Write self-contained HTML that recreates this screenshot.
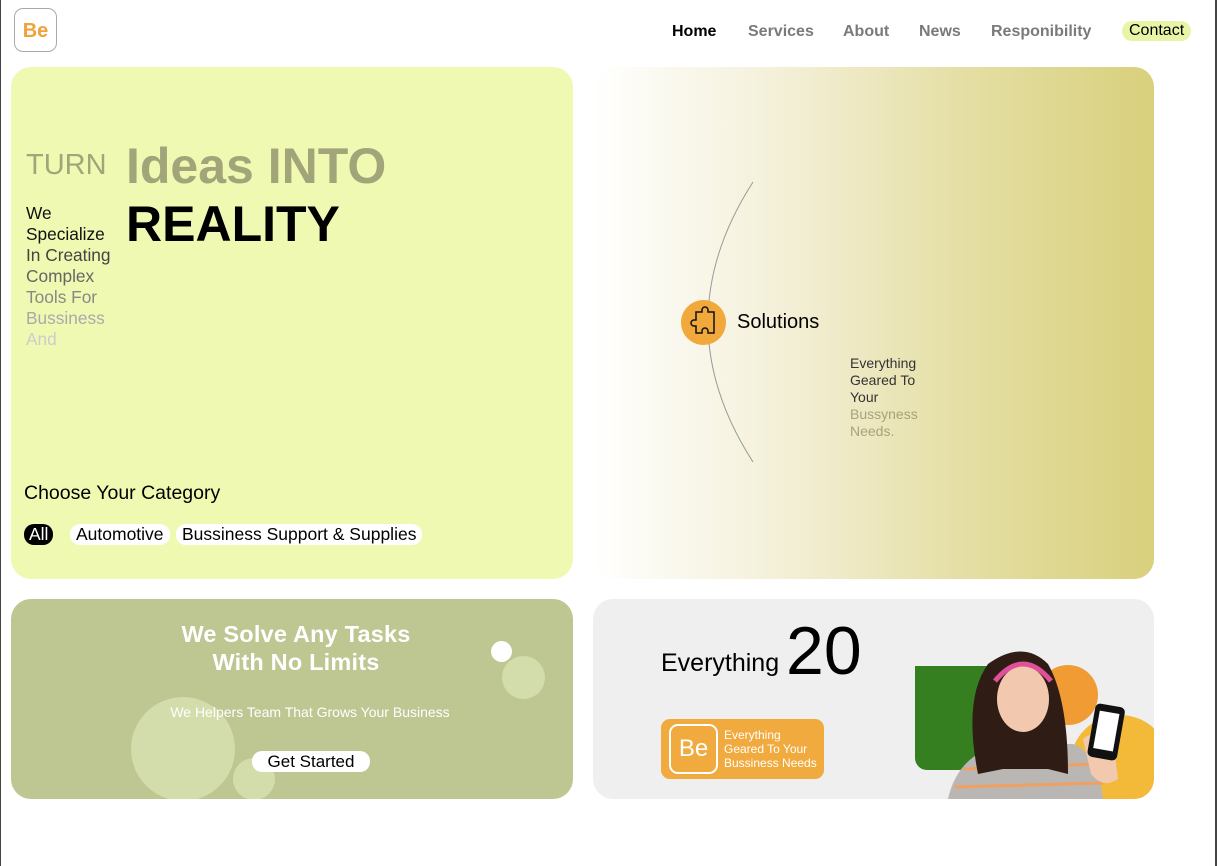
<!DOCTYPE html>
<html><head><meta charset="utf-8"><style>
*{margin:0;padding:0;box-sizing:border-box}
body{width:1217px;height:866px;background:#fff;font-family:"Liberation Sans",Arial,sans-serif;position:relative;overflow:hidden}
.a{position:absolute}
.logo{left:14px;top:8px;width:43px;height:44px;border:1px solid #aaa;border-radius:9px;color:#f0a23b;font-weight:bold;font-size:20px;text-align:center;line-height:44px}
.nav{top:23px;font-size:16px;font-weight:bold;color:#7a7a7a}
.card{border-radius:20px;overflow:hidden}
.tag{background:#fff;border-radius:10px;padding:0 6px;font-size:17.5px;line-height:21px;height:21px;top:524px}
</style></head><body>
<div class="a" style="left:0;top:0;width:1px;height:866px;background:#444"></div>
<div class="a" style="left:1215px;top:0;width:2px;height:866px;background:#444"></div>
<div class="a logo">Be</div>
<div class="a nav" style="left:672px;color:#000">Home</div>
<div class="a nav" style="left:748px">Services</div>
<div class="a nav" style="left:843px">About</div>
<div class="a nav" style="left:919px">News</div>
<div class="a nav" style="left:991px">Responibility</div>
<div class="a" style="left:1122px;top:21px;background:#e8f5a6;border-radius:11px;padding:0 7px;font-size:16px;line-height:20px">Contact</div>

<div class="a card" style="left:11px;top:67px;width:562px;height:512px;background:#f0f9b2">
 <div class="a" style="left:15px;top:82px;font-size:29px;color:#a2a57a">TURN</div>
 <div class="a" style="left:115px;top:70px;font-size:50px;font-weight:bold;color:#a2a57a">Ideas INTO</div>
 <div class="a" style="left:115px;top:128px;font-size:50px;font-weight:bold;color:#000">REALITY</div>
 <div class="a" style="left:15px;top:136px;font-size:17.3px;line-height:21px;width:95px">
  <span style="color:#111">We<br>Specialize</span><br><span style="color:#444">In Creating</span><br><span style="color:#666">Complex</span><br><span style="color:#888">Tools For</span><br><span style="color:#aaa">Bussiness</span><br><span style="color:#ccc">And</span></div>
 <div class="a" style="left:13px;top:415px;font-size:19.5px">Choose Your Category</div>
 <div class="a tag" style="left:13px;background:#000;color:#fff;padding:0 5px;top:457px">All</div>
 <div class="a tag" style="left:59px;top:457px">Automotive</div>
 <div class="a tag" style="left:165px;top:457px">Bussiness Support &amp; Supplies</div>
</div>

<div class="a card" style="left:593px;top:67px;width:561px;height:512px;background:linear-gradient(90deg,#fff 0%,#f3efd6 35%,#e5dfa6 65%,#d8d07c 100%)">
 <svg class="a" style="left:0;top:0" width="561" height="512"><path d="M160 115 Q70 255 160 395" fill="none" stroke="#999" stroke-width="1"/></svg>
 <div class="a" style="left:88px;top:233px;width:45px;height:45px;border-radius:50%;background:#f1a93c"></div>
 <svg class="a" style="left:88px;top:233px" width="45" height="45"><path d="M15 12h6v-2a3 3 0 0 1 6 0v2h6v21h-6v-2a3 3 0 0 0-6 0v2h-6v-7h-2a3 3 0 0 1 0-6h2z" fill="none" stroke="#111" stroke-width="1.5"/></svg>
 <div class="a" style="left:144px;top:244px;font-size:20px">Solutions</div>
 <div class="a" style="left:257px;top:288px;font-size:14px;line-height:17px"><span style="color:#333">Everything<br>Geared To<br>Your</span><br><span style="color:#a6a37a">Bussyness<br>Needs.</span></div>
</div>

<div class="a card" style="left:11px;top:599px;width:562px;height:200px;background:#bec692">
 <div class="a" style="left:120px;top:98px;width:104px;height:104px;border-radius:50%;background:#d3dcab"></div>
 <div class="a" style="left:222px;top:159px;width:42px;height:42px;border-radius:50%;background:#d3dcab"></div>
 <div class="a" style="left:491px;top:57px;width:43px;height:43px;border-radius:50%;background:#d3dcab"></div>
 <div class="a" style="left:480px;top:42px;width:21px;height:21px;border-radius:50%;background:#fff"></div>
 <div class="a" style="left:0;width:570px;top:21px;text-align:center;color:#fff;font-weight:bold;font-size:23.5px;line-height:28px;letter-spacing:0.2px">We Solve Any Tasks<br>With No Limits</div>
 <div class="a" style="left:14px;width:570px;top:105px;text-align:center;color:#fff;font-size:14px">We Helpers Team That Grows Your Business</div>
 <div class="a" style="left:241px;top:152px;width:118px;height:21px;background:#fff;border-radius:10px;text-align:center;font-size:17px;line-height:21px">Get Started</div>
</div>

<div class="a card" style="left:593px;top:599px;width:561px;height:200px;background:#efefef">
 <div class="a" style="left:68px;top:50px;font-size:25px">Everything</div>
 <div class="a" style="left:193px;top:13px;font-size:68px">20</div>
 <div class="a" style="left:68px;top:120px;width:163px;height:60px;background:#f1aa3e;border-radius:9px"></div>
 <div class="a" style="left:76px;top:125px;width:49px;height:50px;border:2px solid #fff;border-radius:9px;color:#fff;font-size:24px;text-align:center;line-height:46px">Be</div>
 <div class="a" style="left:131px;top:129px;color:#fff;font-size:12px;line-height:14px">Everything<br>Geared To Your<br>Bussiness Needs</div>
 <div class="a" style="left:322px;top:67px;width:100px;height:104px;background:#357f21;border-radius:0 0 0 12px"></div>
 <div class="a" style="left:445px;top:66px;width:60px;height:60px;border-radius:50%;background:#f09b34"></div>
 <div class="a" style="left:477px;top:116px;width:100px;height:100px;border-radius:50%;background:#f3ba3a"></div>
 <svg class="a" style="left:340px;top:40px" width="220" height="160">
  <path d="M15 160 Q25 115 70 105 L140 105 Q165 115 170 160Z" fill="#b9b6b4"/>
  <path d="M30 130 L165 125 M22 148 L170 144" stroke="#f0a060" stroke-width="3"/>
  <path d="M45 135 Q30 60 55 25 Q90 0 115 25 Q135 60 135 135 L115 130 L70 130Z" fill="#2f1c14"/>
  <ellipse cx="90" cy="60" rx="26" ry="33" fill="#f2c8ae"/>
  <path d="M62 42 Q90 8 118 42" fill="none" stroke="#e0509a" stroke-width="5"/>
  <path d="M150 100 Q165 88 180 100 L185 140 Q170 150 158 135Z" fill="#f2c8ae"/>
  <rect x="158" y="66" width="30" height="54" rx="5" fill="#111" transform="rotate(10 173 94)"/>
  <rect x="163" y="73" width="20" height="38" fill="#fff" transform="rotate(10 173 94)"/>
 </svg>
</div>
</body></html>
